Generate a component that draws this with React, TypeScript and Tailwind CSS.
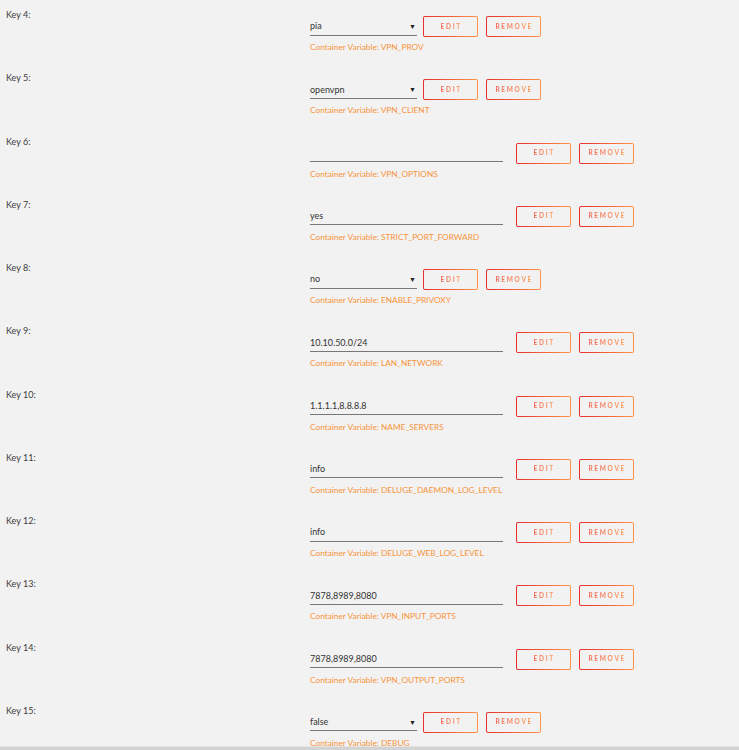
const FONT = "font-['Lato','Open_Sans',sans-serif]"

type Row = { key: number; value: string; kind: 'select' | 'text'; variable: string }

const ROWS: Row[] = [
  { key: 4, value: 'pia', kind: 'select', variable: 'VPN_PROV' },
  { key: 5, value: 'openvpn', kind: 'select', variable: 'VPN_CLIENT' },
  { key: 6, value: '', kind: 'text', variable: 'VPN_OPTIONS' },
  { key: 7, value: 'yes', kind: 'text', variable: 'STRICT_PORT_FORWARD' },
  { key: 8, value: 'no', kind: 'select', variable: 'ENABLE_PRIVOXY' },
  { key: 9, value: '10.10.50.0/24', kind: 'text', variable: 'LAN_NETWORK' },
  { key: 10, value: '1.1.1.1,8.8.8.8', kind: 'text', variable: 'NAME_SERVERS' },
  { key: 11, value: 'info', kind: 'text', variable: 'DELUGE_DAEMON_LOG_LEVEL' },
  { key: 12, value: 'info', kind: 'text', variable: 'DELUGE_WEB_LOG_LEVEL' },
  { key: 13, value: '7878,8989,8080', kind: 'text', variable: 'VPN_INPUT_PORTS' },
  { key: 14, value: '7878,8989,8080', kind: 'text', variable: 'VPN_OUTPUT_PORTS' },
  { key: 15, value: 'false', kind: 'select', variable: 'DEBUG' },
]

// gradient border + gradient text, same look as the unraid buttons
function GradientButton({ label }: { label: string }) {
  return (
    <div className="flex h-[21px] w-[55px] items-center justify-center rounded-[2px] border-[1.5px] border-transparent [background:linear-gradient(#f2f2f2,#f2f2f2)_padding-box,linear-gradient(to_right,#e62e2e,#ff9448)_border-box]">
      <span className="bg-gradient-to-r from-[#f06050] to-[#ffa060] bg-clip-text pl-[1.5px] text-[6.5px] font-bold uppercase tracking-[1.7px] text-transparent">
        {label}
      </span>
    </div>
  )
}

function ConfigRow({ row }: { row: Row }) {
  const isSelect = row.kind === 'select'
  return (
    <div className="flex h-[63.25px]">
      <div className="w-[310px] pl-[6px] pt-[9px] text-[9px] leading-[12px] text-[#3c3c3c]">Key {row.key}:</div>
      <div className="flex flex-col pt-[16px]">
        <div className="flex h-[21px] items-center">
          <div
            className={`flex h-[18px] items-center justify-between border-b border-[#777] text-[9px] text-[#333] ${
              isSelect ? 'mr-[6px] w-[107px]' : 'mr-[13px] w-[193px]'
            }`}
          >
            <span>{row.value}</span>
            {isSelect && <span className="pr-[1px] text-[7px] text-[#222]">▼</span>}
          </div>
          <div className="flex gap-[8px]">
            <GradientButton label="Edit" />
            <GradientButton label="Remove" />
          </div>
        </div>
        <div className="mt-[5px] text-[8.3px] leading-[10px] text-[#f7943a]">Container Variable: {row.variable}</div>
      </div>
    </div>
  )
}

export default function App() {
  return (
    <div className={`relative h-[750px] w-full overflow-hidden bg-[#f2f2f2] ${FONT}`}>
      {ROWS.map((row) => (
        <ConfigRow key={row.key} row={row} />
      ))}
      <div className="absolute inset-x-0 bottom-0 h-[4px] border-t border-[#e4e4e4] bg-[#d3d3d3]" />
    </div>
  )
}
